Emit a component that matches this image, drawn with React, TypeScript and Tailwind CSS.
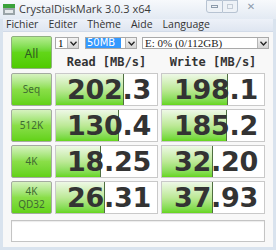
const rows = [
  { label: ["Seq"], read: "202.3", write: "198.1", rb: 0.67, wb: 0.645 },
  { label: ["512K"], read: "130.4", write: "185.2", rb: 0.62, wb: 0.64 },
  { label: ["4K"], read: "18.25", write: "32.20", rb: 0.45, wb: 0.5 },
  { label: ["4K", "QD32"], read: "26.31", write: "37.93", rb: 0.485, wb: 0.5 },
];

function Chevron() {
  return (
    <svg width="7" height="5" viewBox="0 0 7 5">
      <path d="M0.5 0.8 L3.5 4 L6.5 0.8" fill="none" stroke="#222" strokeWidth="1.3" />
    </svg>
  );
}

function DropArrow() {
  return (
    <div className="w-[11px] h-full flex items-center justify-center bg-gradient-to-b from-[#f2f2f2] to-[#d4d4d4] border-l border-[#b5b5b5]">
      <Chevron />
    </div>
  );
}

function ScoreCell({ value, bar }: { value: string; bar: number }) {
  return (
    <div className="relative h-[33px] bg-white border border-[#c9c9c9] overflow-hidden">
      <div
        className="absolute left-0 top-0 bottom-0 bg-gradient-to-b from-[#eef8e6] via-[#bde997] to-[#66d61a] border-r border-[#4f6f40]"
        style={{ width: `${bar * 100}%` }}
      />
      <div className="relative h-full flex items-center justify-end pr-[6px] text-[27px] leading-none font-bold text-[#333333] font-['DejaVu_Sans',sans-serif] tracking-[-0.3px]">
        {value}
      </div>
    </div>
  );
}

function TestButton({ label }: { label: string[] }) {
  return (
    <div className="h-[33px] flex flex-col items-center justify-center rounded-[2px] border border-[#a3aba0] bg-gradient-to-b from-[#d6f2bf] via-[#8ade48] to-[#62d214] text-[10px] leading-[13px] text-[#3f6a33] font-['Noto_Sans',sans-serif]">
      {label.map((l) => (
        <span key={l}>{l}</span>
      ))}
    </div>
  );
}

export default function App() {
  return (
    <div className="w-[276px] h-[250px] flex flex-col bg-[#d9e3ee] overflow-hidden">
      <div className="h-[19px] flex items-center bg-gradient-to-b from-[#f7f9fc] to-[#e3eaf3]">
        <svg width="12" height="11" viewBox="0 0 12 11" className="ml-[3px] mr-[4px]">
          <rect x="0" y="0" width="12" height="4" fill="#3aa23a" />
          <rect x="0" y="4" width="12" height="7" fill="#9aa4a8" />
          <rect x="2" y="6" width="8" height="3" fill="#e6eaec" />
        </svg>
        <span className="text-[11px] text-[#3a3a3a] font-['Open_Sans',sans-serif]">CrystalDiskMark 3.0.3 x64</span>
        <div className="ml-auto mr-[12px] self-start flex items-start">
          <div className="w-[17px] h-[13px] border border-[#b7c3d2] rounded-bl-[3px] flex items-center justify-center bg-[#eef2f7]">
            <div className="w-[7px] h-[3px] border border-[#8d9bab]" />
          </div>
          <div className="w-[15px] h-[13px] border border-l-0 border-[#b7c3d2] rounded-br-[3px] flex items-center justify-center bg-[#eef2f7]">
            <div className="w-[6px] h-[5px] border border-[#c4ccd6]" />
          </div>
          <div className="w-[26px] h-[13px] flex items-center justify-center text-[10px] text-[#8d9bab] font-['DejaVu_Sans',sans-serif]">
            ✕
          </div>
        </div>
      </div>
      <div className="mx-[3px] flex-1 flex flex-col bg-[#f8f8f8] mb-[3px]">
        <div className="h-[13px] flex items-center gap-[10px] px-[3px] bg-gradient-to-b from-[#edf1f8] to-[#dfe6f1] border-b border-[#d2dbe8] text-[10.5px] text-[#333] font-['Open_Sans',sans-serif]">
          <span>Fichier</span>
          <span>Editer</span>
          <span>Thème</span>
          <span>Aide</span>
          <span>Language</span>
        </div>
        <div className="pl-[8px] pt-[4px] flex flex-col">
          <div className="flex gap-[3px]">
            <div className="w-[41px] h-[33px] flex items-center justify-center pt-[3px] rounded-[2px] border border-[#8fb07f] bg-gradient-to-b from-[#b4ec8e] via-[#62d618] to-[#4fcb00] text-[12px] text-[#2e5c22] font-['Noto_Sans',sans-serif]">
              All
            </div>
            <div className="flex flex-col">
              <div className="h-[12px] mt-[1px] flex items-stretch text-[10px] leading-none">
                <div className="w-[24px] flex bg-white border border-[#a9a9a9]">
                  <span className="flex-1 flex items-center pl-[2px] font-['Liberation_Serif',serif] text-[11px]">1</span>
                  <DropArrow />
                </div>
                <div className="ml-[6px] w-[52px] flex bg-white border border-[#a9a9a9]">
                  <span className="flex-1 flex items-center">
                    <span className="bg-[#3399ff] text-white px-[1px] h-full flex items-center font-['DejaVu_Sans',sans-serif] text-[10px] w-[35px]">50MB</span>
                  </span>
                  <DropArrow />
                </div>
                <div className="ml-[5px] w-[127px] flex bg-white border border-[#a9a9a9]">
                  <span className="flex-1 flex items-center pl-[2px] font-['Liberation_Serif',serif] text-[11px] text-[#222]">E: 0% (0/112GB)</span>
                  <DropArrow />
                </div>
              </div>
              <div className="flex gap-[3px] mt-[7px] text-[12px] font-bold text-[#333] font-['DejaVu_Sans_Mono',monospace] leading-[12px]">
                <div className="w-[103px] text-center">Read [MB/s]</div>
                <div className="w-[104px] text-center">Write [MB/s]</div>
              </div>
            </div>
          </div>
          <div className="mt-[4px] flex flex-col gap-[3px]">
            {rows.map((r) => (
              <div key={r.read} className="grid grid-cols-[41px_103px_104px] gap-[3px]">
                <TestButton label={r.label} />
                <ScoreCell value={r.read} bar={r.rb} />
                <ScoreCell value={r.write} bar={r.wb} />
              </div>
            ))}
          </div>
          <div className="mt-[6px] w-[254px] h-[22px] bg-white border border-[#c4c4c4] shadow-[inset_0_1px_1px_rgba(0,0,0,0.08)]" />
        </div>
      </div>
    </div>
  );
}
